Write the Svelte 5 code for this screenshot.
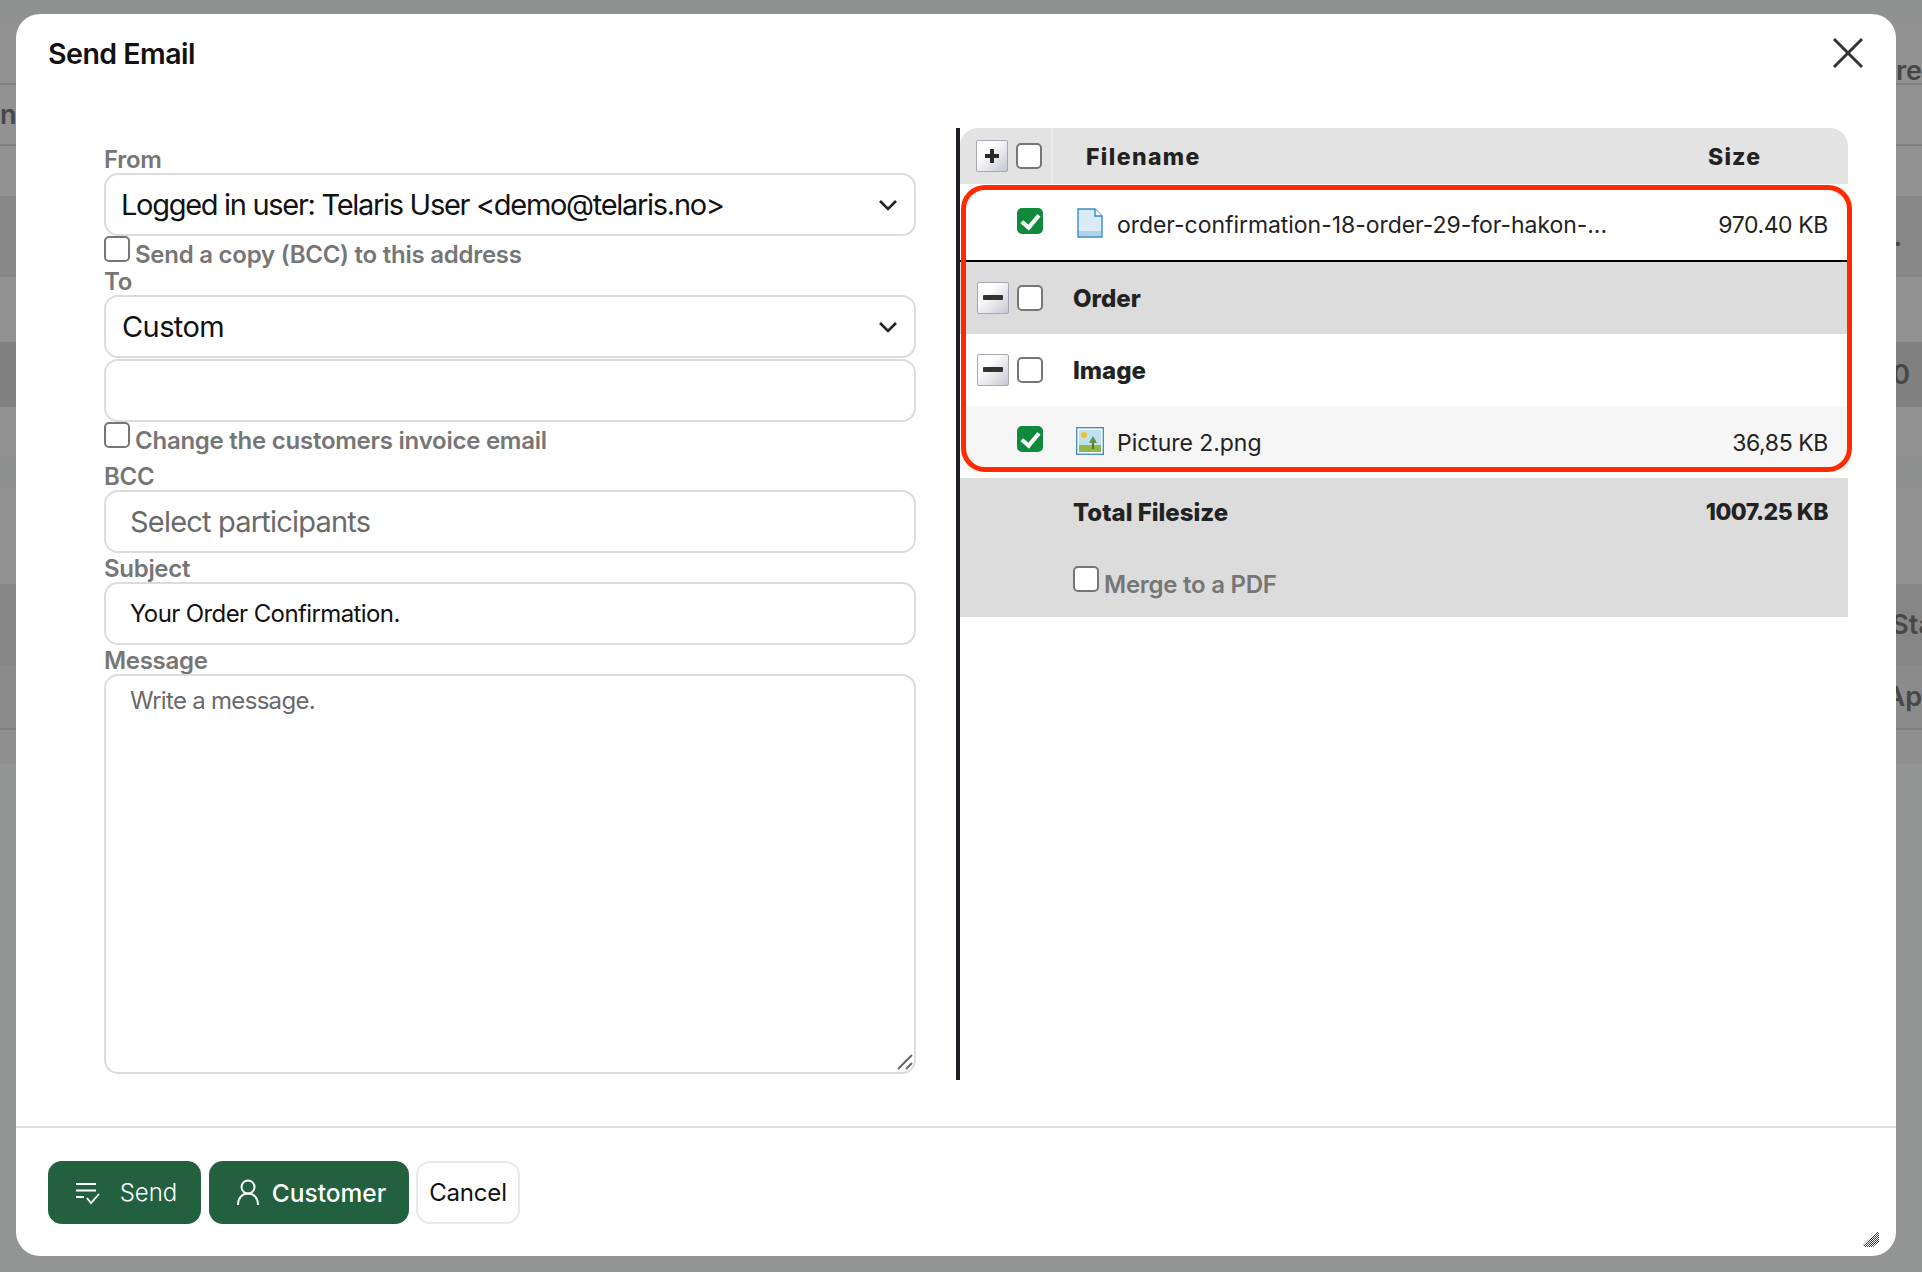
<script>
	const bands = [
		{ h: 24, bg: '#8f9190' },
		{ h: 61, bg: '#929292', line: true, right: 'ere', end: true },
		{ h: 61, bg: '#929292', line: true, left: 'n' },
		{ h: 50, bg: '#929292' },
		{ h: 81, bg: '#878787', right: '.', mr: 20 },
		{ h: 65, bg: '#919191' },
		{ h: 65, bg: '#808080', right: '0', mr: 12 },
		{ h: 49, bg: '#919191' },
		{ h: 32, bg: '#8c8f8e' },
		{ h: 96, bg: '#919191' },
		{ h: 81, bg: '#868686', right: 'Sta', mr: -12 },
		{ h: 65, bg: '#8b8b8b', line: true, right: 'Ap' },
		{ h: 34, bg: '#8f8f8f' }
	];
</script>

<div class="page">
	{#each bands as band}
		<div class="band" class:line={band.line} class:end={band.end} style="height: {band.h}px; background: {band.bg}">
			<span>{band.left ?? ''}</span>
			<span style="margin-right: {band.mr ?? 0}px">{band.right ?? ''}</span>
		</div>
	{/each}
</div>

<div class="overlay">
	<div class="modal">
		<header>
			<h1>Send Email</h1>
			<button class="close" aria-label="Close">
				<svg width="32" height="32" viewBox="0 0 32 32" fill="none" stroke="#333" stroke-width="3">
					<path d="M2 2 30 30M30 2 2 30" />
				</svg>
			</button>
		</header>

		<div class="body">
			<form class="fields">
				<label class="title" for="from">From</label>
				<div class="select-wrap">
					<select id="from">
						<option>Logged in user: Telaris User &lt;demo@telaris.no&gt;</option>
					</select>
					<svg class="chev" width="20" height="12" viewBox="0 0 20 12" fill="none" stroke="#222" stroke-width="2.6">
						<path d="M2 2 10 10 18 2" />
					</svg>
				</div>
				<label class="check first"><input type="checkbox" />Send a copy (BCC) to this address</label>

				<label class="title" for="to">To</label>
				<div class="select-wrap">
					<select id="to">
						<option>Custom</option>
					</select>
					<svg class="chev" width="20" height="12" viewBox="0 0 20 12" fill="none" stroke="#222" stroke-width="2.6">
						<path d="M2 2 10 10 18 2" />
					</svg>
				</div>
				<input class="text custom" type="text" />
				<label class="check second"><input type="checkbox" />Change the customers invoice email</label>

				<label class="title" for="bcc">BCC</label>
				<input id="bcc" class="text big" type="text" placeholder="Select participants" />
				<label class="title tall" for="subject">Subject</label>
				<input id="subject" class="text" type="text" value="Your Order Confirmation." />
				<label class="title tall" for="message">Message</label>
				<div class="area-wrap">
					<textarea id="message" placeholder="Write a message."></textarea>
					<svg class="area-grip" width="16" height="16" viewBox="0 0 16 16" fill="none" stroke="#666" stroke-width="2">
						<path d="M1 15 15 1M9 15l6-6" />
					</svg>
				</div>
			</form>

			<div class="files">
				<div class="row head">
					<div class="ctrl">
						<button class="tree" type="button" aria-label="Expand">
							<svg width="16" height="16" viewBox="0 0 16 16"><path d="M6 1h4v5h5v4h-5v5H6v-5H1V6h5z" fill="#2a2a2a" /></svg>
						</button>
						<input type="checkbox" />
					</div>
					<span class="name">Filename</span>
					<span class="size">Size</span>
				</div>

				<div class="spacer-top"></div>

				<div class="row file first-file">
					<div class="ctrl"><input type="checkbox" checked /></div>
					<svg class="doc" width="26" height="30" viewBox="0 0 26 30">
						<path d="M1 1h17l7 7v21H1z" fill="#d9ebf6" stroke="#3a8cc4" stroke-width="1.4" />
						<rect x="2" y="23" width="22" height="5" fill="#aed4ea" />
						<path d="M18 1v7h7" fill="#fff" stroke="#3a8cc4" stroke-width="1.4" />
					</svg>
					<span class="filename">order-confirmation-18-order-29-for-hakon-...</span>
					<span class="kb">970.40 KB</span>
				</div>
				<div class="row group grey">
					<div class="ctrl">
						<button class="tree" type="button" aria-label="Collapse">
							<svg width="20" height="6" viewBox="0 0 20 6"><rect width="20" height="5" rx="1" fill="#333" /></svg>
						</button>
						<input type="checkbox" />
					</div>
					<span class="group-name">Order</span>
				</div>
				<div class="row group">
					<div class="ctrl">
						<button class="tree" type="button" aria-label="Collapse">
							<svg width="20" height="6" viewBox="0 0 20 6"><rect width="20" height="5" rx="1" fill="#333" /></svg>
						</button>
						<input type="checkbox" />
					</div>
					<span class="group-name">Image</span>
				</div>
				<div class="row file last-file">
					<div class="ctrl"><input type="checkbox" checked /></div>
					<svg class="pic" width="28" height="28" viewBox="0 0 28 28">
						<rect x=".7" y=".7" width="26.6" height="26.6" fill="#fff" stroke="#4a8fc2" stroke-width="1.4" />
						<rect x="3" y="3" width="22" height="16" fill="#bfe0ee" />
						<rect x="3" y="18" width="22" height="7" fill="#8db84a" />
						<circle cx="8" cy="8" r="3" fill="#f3bf2d" />
						<rect x="16" y="16" width="2" height="6" fill="#8a5a2b" />
						<path d="M17 9l4 7h-8z" fill="#5a9440" />
					</svg>
					<span class="filename">Picture 2.png</span>
					<span class="kb">36,85 KB</span>
				</div>

				<div class="summary">
					<div class="total">
						<span>Total Filesize</span>
						<span class="total-kb">1007.25 KB</span>
					</div>
					<label class="check merge"><input type="checkbox" />Merge to a PDF</label>
				</div>

				<div class="highlight"></div>
			</div>
		</div>

		<footer>
			<button class="btn green send" type="button">
				<svg width="26" height="24" viewBox="0 0 26 24" fill="none" stroke="#fff" stroke-width="1.8">
					<path d="M1 3h20M1 9.500h20M1 16h8M12 17l4 5 8-9" />
				</svg>
				Send
			</button>
			<button class="btn green customer" type="button">
				<svg width="24" height="27" viewBox="0 0 24 27" fill="none" stroke="#fff" stroke-width="2">
					<circle cx="12" cy="8" r="6.5" />
					<path d="M2 26c0-7 4-11.500 10-11.500S22 19 22 26" />
				</svg>
				Customer
			</button>
			<button class="btn cancel" type="button">Cancel</button>
		</footer>

		<svg class="grip" width="16" height="15" viewBox="0 0 16 15">
			<defs>
				<pattern id="dots" width="2" height="2" patternUnits="userSpaceOnUse">
					<rect width="1" height="1" fill="#3c3c3c" />
					<rect x="1" y="1" width="1" height="1" fill="#3c3c3c" />
				</pattern>
			</defs>
			<path d="M0 13 14 0h2v10l-6 5H2z" fill="url(#dots)" />
		</svg>
	</div>
</div>

<style>
	:global(body) {
		background: #939594;
		font-family: Inter, 'Liberation Sans', sans-serif;
	}

	.page {
		height: 1272px;
		overflow: hidden;
	}

	.band {
		display: flex;
		justify-content: space-between;
		align-items: center;
		box-sizing: border-box;
		font-size: 27px;
		font-weight: 600;
		color: #474747;
		white-space: nowrap;
	}

	.band.line {
		border-bottom: 2px solid #7f7f7f;
	}

	.band.end {
		align-items: flex-end;
		line-height: 24px;
	}

	.overlay {
		position: absolute;
		top: 0;
		left: 0;
		width: 1922px;
		height: 1272px;
		padding: 14px 26px 16px 16px;
		box-sizing: border-box;
	}

	.modal {
		position: relative;
		height: 100%;
		display: flex;
		flex-direction: column;
		background: #fff;
		border-radius: 24px;
	}

	header {
		display: flex;
		justify-content: space-between;
		height: 114px;
		padding: 0 32px 0 32px;
		box-sizing: border-box;
		align-items: flex-start;
	}

	h1 {
		margin: 22px 0 0;
		font-size: 28.5px;
		font-weight: 600;
		letter-spacing: -0.5px;
		line-height: 35px;
		color: #111;
	}

	.close {
		margin-top: 23px;
		padding: 0;
		border: 0;
		background: none;
		line-height: 0;
	}

	.body {
		display: flex;
		height: 952px;
	}

	.fields {
		display: flex;
		flex-direction: column;
		box-sizing: border-box;
		width: 940px;
		padding: 18px 40px 0 88px;
		flex: none;
	}

	.title {
		display: block;
		box-sizing: border-box;
		height: 27px;
		font-size: 24px;
		font-weight: 600;
		line-height: 27px;
		letter-spacing: -0.3px;
		color: #767676;
	}

	.title.tall {
		height: 29px;
		padding-top: 2px;
	}

	.select-wrap,
	.area-wrap {
		position: relative;
	}

	select,
	.text,
	textarea {
		display: block;
		width: 100%;
		box-sizing: border-box;
		border: 2px solid #dcdcdc;
		border-radius: 14px;
		background: #fff;
		font-family: inherit;
		color: #111;
		outline: none;
	}

	select {
		height: 63px;
		padding: 0 50px 0 15px;
		appearance: none;
		font-size: 29px;
		letter-spacing: -1.3px;
	}

	#to {
		padding-left: 16px;
		letter-spacing: -0.6px;
	}

	.chev {
		position: absolute;
		right: 18px;
		top: 26px;
		pointer-events: none;
	}

	.area-grip {
		position: absolute;
		right: 3px;
		bottom: 4px;
		pointer-events: none;
	}

	.text {
		flex: none;
		height: 63px;
		padding: 0 24px;
		font-size: 24px;
		letter-spacing: -0.6px;
	}

	.text.custom {
		margin-top: 1px;
	}

	.text.big {
		font-size: 29px;
		letter-spacing: -0.8px;
	}

	.text::placeholder,
	textarea::placeholder {
		color: #6a6a6a;
		opacity: 1;
	}

	textarea {
		height: 400px;
		padding: 10px 24px;
		font-size: 24px;
		letter-spacing: -0.7px;
		resize: none;
	}

	.check {
		display: flex;
		align-items: center;
		font-size: 24px;
		font-weight: 600;
		letter-spacing: -0.25px;
		color: #767676;
	}

	.check.first {
		height: 32px;
		align-items: flex-start;
		line-height: 37px;
	}

	.check.second {
		height: 41px;
		align-items: flex-start;
		line-height: 37px;
	}

	input[type='checkbox'] {
		appearance: none;
		flex: none;
		width: 26px;
		height: 26px;
		margin: 0;
		box-sizing: border-box;
		background: #fff;
		border: 2px solid #767676;
		border-radius: 5px;
	}

	.check input[type='checkbox'] {
		margin-right: 5px;
	}

	input[type='checkbox']:checked {
		position: relative;
		background: #0f8a3c;
		border-color: #0f8a3c;
	}

	input[type='checkbox']:checked::after {
		content: '';
		position: absolute;
		left: 6px;
		top: 1px;
		width: 7px;
		height: 14px;
		border: solid #fff;
		border-width: 0 4px 4px 0;
		transform: rotate(40deg);
	}

	.files {
		position: relative;
		flex: 1;
		margin-right: 48px;
		border-left: 4px solid #1e1e24;
	}

	.row {
		display: flex;
		align-items: center;
		font-size: 23px;
		color: #222;
	}

	.ctrl {
		display: flex;
		align-items: center;
		flex: none;
		width: 113px;
		box-sizing: border-box;
		padding-left: 57px;
	}

	.tree {
		display: flex;
		align-items: center;
		justify-content: center;
		width: 32px;
		height: 32px;
		margin: 0 8px 0 -40px;
		padding: 0;
		box-sizing: border-box;
		border: 1px solid #a6a6b4;
		border-radius: 2px;
		background: linear-gradient(135deg, #fff 30%, #c6c6d2);
	}

	.head {
		height: 56px;
		border-radius: 18px 18px 0 0;
		background: #e3e3e3;
	}

	.head .ctrl {
		align-self: stretch;
		width: 93px;
		padding-left: 56px;
		border-right: 2px solid #ececec;
	}

	.name {
		flex: 1;
		margin-left: 33px;
		padding-top: 2px;
		font-weight: 800;
		letter-spacing: 1.4px;
	}

	.size {
		width: 140px;
		padding-top: 2px;
		font-weight: 800;
		letter-spacing: 1.2px;
	}

	.spacer-top {
		height: 3px;
	}

	.file {
		background: #fff;
		padding-right: 20px;
	}

	.first-file {
		height: 71px;
		border-bottom: 2px solid #000;
		box-sizing: content-box;
		align-items: flex-start;
		padding-top: 2px;
	}

	.first-file .ctrl,
	.first-file .doc {
		margin-top: 19px;
	}

	.first-file span {
		margin-top: 22px;
	}

	.doc {
		flex: none;
		margin-left: 4px;
		margin-right: 14px;
	}

	.pic {
		flex: none;
		margin-left: 3px;
		margin-right: 13px;
	}

	.filename {
		flex: 1;
		font-size: 23px;
		letter-spacing: -0.05px;
		white-space: nowrap;
	}

	.kb {
		font-size: 23px;
		letter-spacing: -0.4px;
	}

	.group {
		height: 72px;
	}

	.group.grey {
		background: #dcdcdc;
	}

	.group-name {
		font-weight: 800;
		font-size: 24px;
	}

	.last-file {
		height: 64px;
		background: #f6f6f6;
		padding-top: 10px;
		box-sizing: border-box;
		align-items: flex-start;
	}

	.last-file .ctrl {
		margin-top: 10px;
	}

	.last-file .pic {
		margin-top: 11px;
	}

	.last-file span {
		margin-top: 13px;
	}

	.summary {
		margin-top: 8px;
		height: 139px;
		box-sizing: border-box;
		padding: 20px 20px 0 113px;
		background: #dcdcdc;
	}

	.total {
		display: flex;
		justify-content: space-between;
		font-size: 24px;
		font-weight: 800;
		color: #222;
	}

	.total-kb {
		font-size: 23px;
		letter-spacing: -0.5px;
	}

	.merge {
		margin-top: 39px;
		align-items: flex-start;
		line-height: 37px;
	}

	.highlight {
		position: absolute;
		left: 1px;
		top: 57px;
		right: -4px;
		height: 287px;
		box-sizing: border-box;
		border: 5px solid #ff2a00;
		border-radius: 24px;
		pointer-events: none;
	}

	footer {
		display: flex;
		align-items: flex-start;
		height: 130px;
		box-sizing: border-box;
		margin-top: 46px;
		padding: 33px 32px 0;
		border-top: 2px solid #e0e0e4;
	}

	.btn {
		display: flex;
		align-items: center;
		justify-content: center;
		height: 63px;
		padding: 0;
		box-sizing: border-box;
		border: 0;
		border-radius: 14px;
		font-family: inherit;
		font-size: 24px;
	}

	.green {
		background: #22603f;
		color: #fff;
	}

	.send {
		width: 153px;
		gap: 19px;
		padding-left: 3px;
		font-weight: 300;
		margin-right: 8px;
	}

	.customer {
		width: 200px;
		gap: 12px;
		padding-left: 4px;
		font-size: 24.5px;
		font-weight: 500;
		margin-right: 7px;
	}

	.cancel {
		width: 104px;
		background: #fff;
		border: 2px solid #e8e8ee;
		color: #111;
		letter-spacing: -0.2px;
	}

	.grip {
		position: absolute;
		right: 17px;
		bottom: 9px;
	}
</style>
